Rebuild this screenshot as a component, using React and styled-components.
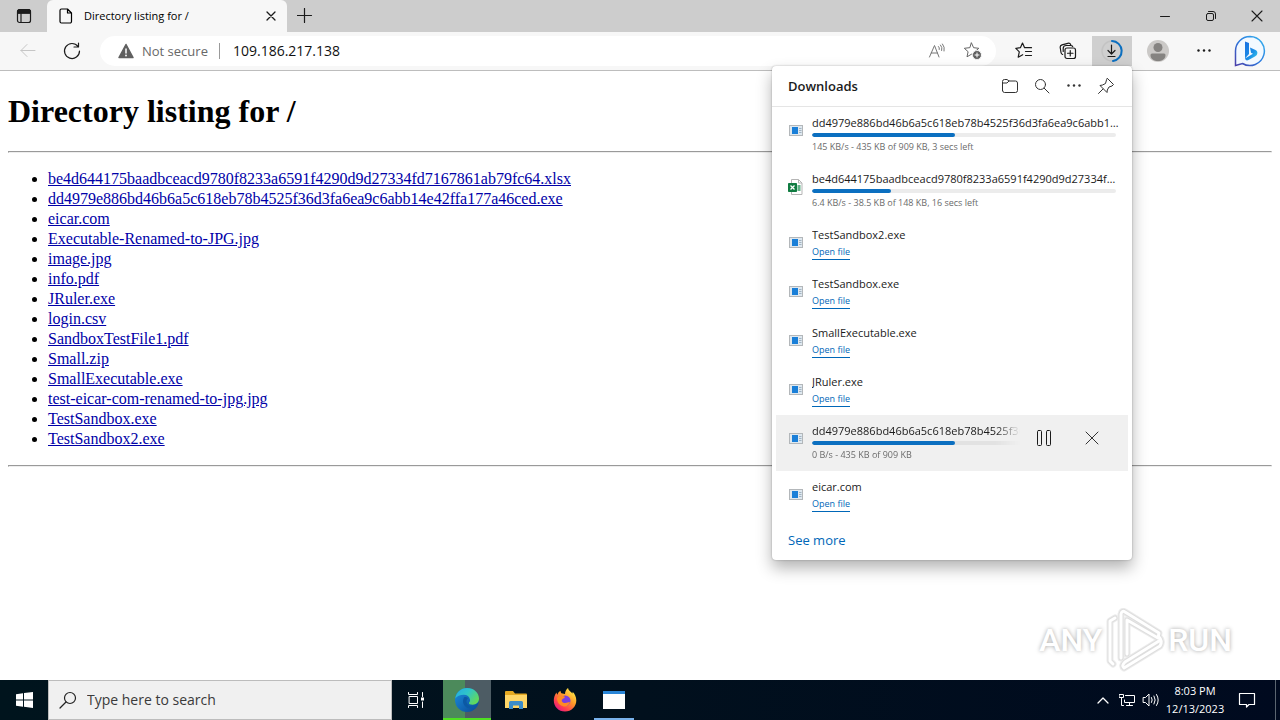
import React from "react";
import styled, { createGlobalStyle } from "styled-components";

const GlobalStyle = createGlobalStyle`
  *, *::before, *::after { box-sizing: border-box; }
  html, body { margin: 0; padding: 0; background: #fff; }
  button, input { font-family: inherit; }
  svg { display: block; flex: none; }
`;

const ui = `"Open Sans", "Noto Sans", sans-serif`;

const Desktop = styled.div`
  min-height: 100vh;
  display: flex;
  flex-direction: column;
  font-family: ${ui};
  color: #1b1b1b;
`;

/* ---------- title bar ---------- */

const TitleBar = styled.header`
  height: 32px;
  display: flex;
  align-items: stretch;
  background: #cdcdcd;
`;

const IconButton = styled.button`
  width: ${(p) => p.$w || 40}px;
  height: ${(p) => (p.$h ? p.$h + "px" : "auto")};
  flex: none;
  display: flex;
  align-items: center;
  justify-content: center;
  border: 0;
  padding: 0;
  color: ${(p) => p.$color || "#1b1b1b"};
  background: ${(p) => p.$bg || "transparent"};
`;

const Tab = styled.div`
  width: 240px;
  display: flex;
  align-items: center;
  padding: 0 4px 0 12px;
  background: #f7f7f7;
  border-radius: 6px 6px 0 0;
  font-size: 11px;
  line-height: 16px;
  color: #000;
`;

const TabTitle = styled.span`
  flex: 1;
  padding-left: 11px;
  white-space: nowrap;
`;

const Spacer = styled.div`
  flex: 1;
`;

/* ---------- toolbar ---------- */

const ToolbarWrap = styled.div`
  position: relative;
  z-index: 2;
`;

const Toolbar = styled.div`
  height: 39px;
  display: flex;
  align-items: center;
  gap: 4px;
  padding: 0 10px 0 8px;
  background: #f7f7f7;
  border-bottom: 1px solid #bdbdbd;
`;

const AddressBar = styled.form`
  flex: 1;
  height: 30px;
  margin: 0 4px;
  display: flex;
  align-items: center;
  padding: 0 5px 0 18px;
  border-radius: 15px;
  background: #fff;
  font-size: 13px;
  line-height: 20px;
`;

const SecurityLabel = styled.span`
  padding: 0 11px 0 8px;
  color: #686868;
  white-space: nowrap;
`;

const AddressInput = styled.input`
  flex: 1;
  min-width: 0;
  height: 16px;
  border: 0;
  border-left: 1px solid #9a9a9a;
  outline: 0;
  padding: 0 0 0 13px;
  background: transparent;
  font-size: 14px;
  line-height: 16px;
  color: #111;
`;

const ToolGroup = styled.div`
  display: flex;
  align-items: center;
  gap: 6px;
  padding-left: 2px;
`;

/* ---------- downloads popup ---------- */

const Popup = styled.section`
  position: absolute;
  top: 34px;
  right: 148px;
  width: 360px;
  background: #fff;
  border-radius: 4px;
  box-shadow: 0 0 2px rgba(0, 0, 0, 0.3), 0 8px 16px rgba(0, 0, 0, 0.3);
`;

const PopupHeader = styled.div`
  height: 41px;
  display: flex;
  align-items: center;
  padding: 0 10px 0 16px;
  border-bottom: 1px solid #e5e5e5;
`;

const PopupTitle = styled.h2`
  flex: 1;
  margin: 0;
  font-size: 13px;
  line-height: 20px;
  font-weight: 600;
`;

const DownloadList = styled.ul`
  list-style: none;
  margin: 0;
  padding: 0 4px;
`;

const DownloadRow = styled.li`
  display: flex;
  align-items: flex-start;
  gap: 8px;
  padding: 8px 12px;
  background: ${(p) => (p.$hovered ? "#f0f0f0" : "transparent")};
`;

const FileIcon = styled.span`
  flex: none;
  width: 16px;
  height: 32px;
  display: flex;
  align-items: center;
  justify-content: center;
`;

const DownloadBody = styled.div`
  flex: 1;
  min-width: 0;
  ${(p) =>
    p.$faded &&
    "overflow: hidden; margin-right: -8px; mask-image: linear-gradient(to right, #000 calc(100% - 24px), transparent);"}
`;

const FileName = styled.div`
  margin-right: -4px;
  font-size: 11px;
  line-height: 16px;
  white-space: nowrap;
  overflow: hidden;
  text-overflow: ${(p) => (p.$clip ? "clip" : "ellipsis")};
`;

const Track = styled.div`
  width: ${(p) => (p.$extended ? "calc(100% + 96px)" : "100%")};
  height: 4px;
  margin: 2px 0;
  border-radius: 2px;
  background: ${(p) => (p.$extended ? "#e2e2e2" : "#ececec")};
  overflow: hidden;
`;

const Fill = styled.div`
  height: 4px;
  border-radius: 2px;
  background: #0b6fc0;
`;

const Status = styled.div`
  font-size: 9px;
  line-height: 16px;
  color: #6b6b6b;
  white-space: nowrap;
`;

const OpenLink = styled.a`
  display: block;
  width: max-content;
  margin-top: 1px;
  border-bottom: 1px solid #0067b8;
  font-size: 9px;
  line-height: 15px;
  color: #0067b8;
  text-decoration: none;
`;

const RowActions = styled.div`
  display: flex;
  height: 30px;
`;

const PopupFooter = styled.div`
  height: 40px;
  display: flex;
  align-items: center;
  padding: 0 16px;
`;

const SeeMore = styled.a`
  font-size: 13px;
  line-height: 20px;
  color: #0067b8;
  text-decoration: none;
`;

/* ---------- page ---------- */

const Page = styled.main`
  flex: 1;
  padding: 0 8px;
  display: flow-root;
  position: relative;
  background: #fff;
  color: #000;
  font-family: "Liberation Serif", "Times New Roman", serif;
  font-size: 16px;
`;

const Heading = styled.h1`
  margin: 21px 0;
  font-size: 32px;
  line-height: 38px;
`;

const Rule = styled.hr`
  margin: 0;
  border: 1px solid #9a9a9a;
  border-bottom-color: #eee;
  border-right-color: #eee;
`;

const Listing = styled.ul`
  margin: 16px 0;
  padding-left: 40px;
  line-height: 20px;
`;

const FileLink = styled.a`
  color: #0000a8;
`;

const Watermark = styled.div`
  position: absolute;
  right: 48px;
  bottom: 8px;
  display: flex;
  align-items: center;
  gap: 3px;
  font-family: Roboto, "Liberation Sans", sans-serif;
  font-size: 32px;
  font-weight: 500;
  line-height: 64px;
  color: #fff;
  text-shadow: 0 0 4px rgba(0, 0, 0, 0.35);
`;

/* ---------- taskbar ---------- */

const Taskbar = styled.footer`
  height: 40px;
  display: flex;
  background: linear-gradient(to right, #00141d, #01101d 50%, #000a1f);
  color: #fff;
`;

const SearchBox = styled.label`
  width: 344px;
  display: flex;
  align-items: center;
  gap: 10px;
  padding: 0 10px;
  background: #f0f0f0;
  border: 1px solid #bcbcbc;
  color: #222;
`;

const SearchInput = styled.input`
  flex: 1;
  min-width: 0;
  border: 0;
  padding: 0;
  outline: 0;
  background: transparent;
  font-size: 14px;
  line-height: 20px;
  &::placeholder { color: #3a3a3a; opacity: 1; }
`;

const Apps = styled.nav`
  display: flex;
  gap: 1px;
  padding-left: 3px;
`;

const AppButton = styled.button`
  width: 48px;
  display: flex;
  align-items: center;
  justify-content: center;
  border: 0;
  padding: 0;
  color: #fff;
  background: ${(p) =>
    p.$active
      ? "linear-gradient(to right, #4c8a5b 45%, #4d5c64 45%)"
      : "transparent"};
  box-shadow: ${(p) => (p.$active ? "inset 0 -2px #4fe022" : "none")};
  position: relative;
  &::after {
    content: "";
    display: ${(p) => (p.$running ? "block" : "none")};
    position: absolute;
    left: 4px;
    right: 4px;
    bottom: 0;
    height: 2px;
    background: #79b2ec;
  }
`;

const Clock = styled.div`
  width: 64px;
  display: flex;
  flex-direction: column;
  justify-content: center;
  text-align: center;
  font-size: 11px;
  line-height: 18px;
  white-space: nowrap;
`;

const ShowDesktop = styled.button`
  width: 5px;
  margin-left: 8px;
  border: 0;
  border-left: 1px solid #5b6570;
  padding: 0;
  background: transparent;
`;

/* ---------- icons ---------- */

const Svg = ({ w = 16, h = w, sw = 1, children }) => (
  <svg
    width={w}
    height={h}
    viewBox={`0 0 ${w} ${h}`}
    fill="none"
    stroke="currentColor"
    strokeWidth={sw}
    strokeLinecap="round"
    strokeLinejoin="round"
    aria-hidden="true"
  >
    {children}
  </svg>
);

const TabActionsIcon = () => (
  <Svg>
    <rect x="1.5" y="1.5" width="13" height="13" rx="2" strokeWidth="1.2" />
    <path d="M1.5 5V3.5a2 2 0 0 1 2-2h9a2 2 0 0 1 2 2V5z" fill="currentColor" />
    <path d="M5 5v9.500" strokeWidth="1.2" />
  </Svg>
);
const PageIcon = () => (
  <Svg w={14} h={16} sw={1.2}>
    <path d="M2.500 1h6l4 4v8.500a1.500 1.500 0 0 1-1.500 1.500H2.500A1.500 1.500 0 0 1 1 13.500v-11A1.500 1.500 0 0 1 2.500 1zM8.500 1v4h4" />
  </Svg>
);
const CrossIcon = ({ s = 8, w = 12, sw = 1.1 }) => {
  const a = (w - s) / 2;
  const b = a + s;
  return (
    <Svg w={w} sw={sw}>
      <path d={`M${a} ${a}L${b} ${b}M${b} ${a}L${a} ${b}`} />
    </Svg>
  );
};
const PlusIcon = () => (
  <Svg sw={1.2}>
    <path d="M7.500 .5v14M.5 7.500h14" />
  </Svg>
);
const MinimizeIcon = () => (
  <Svg w={12}>
    <path d="M1.500 6.500h9" />
  </Svg>
);
const RestoreIcon = () => (
  <Svg w={12}>
    <rect x="1.500" y="3.500" width="7" height="7" rx="1.500" />
    <path d="M3.500 1.500h4.500a2.500 2.500 0 0 1 2.500 2.500v4.500" />
  </Svg>
);
const BackIcon = () => (
  <Svg>
    <path d="M15 7.500H1M7 1.500l-6 6 6 6" />
  </Svg>
);
const RefreshIcon = () => (
  <Svg w={18} sw={1.2}>
    <path d="M16.500 9A7.500 7.500 0 1 1 15 4.500M11 5h4.500V1" />
  </Svg>
);
const WarningIcon = () => (
  <Svg>
    <path d="M8 1.500L15 14.500H1z" fill="#606060" stroke="#606060" strokeWidth="1.500" />
    <path d="M8 6v4" stroke="#fff" strokeWidth="1.500" />
    <circle cx="8" cy="12.500" r="0.900" fill="#fff" stroke="none" />
  </Svg>
);
const ReadAloudIcon = () => (
  <Svg w={18}>
    <path d="M1.500 15L6.500 3.500l4.500 11.500M3.200 11h6.300M10.500 4.500a3 3 0 0 1 .8 3M12.500 3a5.500 5.500 0 0 1 1.200 5.500M14.500 2a8 8 0 0 1 1.600 7" />
  </Svg>
);
const star = "M7.500 1l2.100 4.700 5.200.6-3.900 3.400 1.100 5.100-4.500-2.600L3 14.800l1.100-5.100L.3 6.300l5.200-.6z";
const AddFavoriteIcon = () => (
  <Svg w={18}>
    <path d={star} />
    <circle cx="13" cy="13" r="4.500" fill="#5e5e5e" stroke="#fff" strokeWidth="0.800" />
    <path d="M13 11v4M11 13h4" stroke="#fff" />
  </Svg>
);
const FavoritesIcon = () => (
  <Svg w={18} sw={1.2}>
    <path d="M9.600 5.700L7.500 1 5.400 5.700.8 6.300l3.500 3.500L3.200 15.200l4.500-2.500M9.600 5.700h6.900M10.500 9.500h6M10.500 13.500h6" />
  </Svg>
);
const CollectionsIcon = () => (
  <Svg w={18} sw={1.2}>
    <rect x="6" y="6" width="10.500" height="10.500" rx="2" />
    <path d="M11.250 8.500v5.500M8.500 11.250h5.500M3.600 12.500A2.500 2.500 0 0 1 2 10.500L1.200 5.500a2.500 2.500 0 0 1 1.800-2.700l5.800-1.500a2.500 2.500 0 0 1 3 1.600l.1.600M4.200 9.500V6.500a3 3 0 0 1 3-3h4.500q1.500 0 2 1" />
  </Svg>
);
const DownloadingIcon = () => (
  <Svg w={24} sw={1.2}>
    <circle cx="12" cy="12" r="10" stroke="#c3c3c3" strokeWidth="1.500" />
    <path d="M12 2a10 10 0 0 1 1 19.900" stroke="#0b6fc0" strokeWidth="2" />
    <path d="M11.500 6v9M8 11.500l3.500 3.500 3.500-3.500M8 17.500h7" />
  </Svg>
);
const ProfileIcon = () => (
  <svg width="22" height="22" viewBox="0 0 22 22" aria-hidden="true">
    <circle cx="11" cy="11" r="11" fill="#cbc9c7" />
    <circle cx="11" cy="7.500" r="4.500" fill="#858381" />
    <path d="M3.500 15q0-1.500 1.500-1.500h12q1.500 0 1.500 1.500c0 4-3.500 6-7.500 6s-7.500-2-7.500-6z" fill="#858381" />
  </svg>
);
const DotsIcon = () => (
  <Svg>
    <g fill="currentColor" stroke="none">
      <circle cx="2.500" cy="7.500" r="1.200" />
      <circle cx="8" cy="7.500" r="1.200" />
      <circle cx="13.500" cy="7.500" r="1.200" />
    </g>
  </Svg>
);
const BingIcon = () => (
  <svg width="32" height="32" viewBox="0 0 32 32" aria-hidden="true">
    <defs>
      <linearGradient id="bingRing" x1="1" y1="0" x2="0" y2="1">
        <stop offset="0" stopColor="#36b6ee" />
        <stop offset="0.500" stopColor="#2c7be0" />
        <stop offset="1" stopColor="#4a3ea8" />
      </linearGradient>
      <linearGradient id="bingMark" x1="0" y1="0" x2="1" y2="1">
        <stop offset="0" stopColor="#1a6fe0" />
        <stop offset="0.600" stopColor="#1b8fe8" />
        <stop offset="1" stopColor="#37d0e8" />
      </linearGradient>
    </defs>
    <path d="M16 1.500a14.500 14.500 0 1 1-7.500 27L1.500 30.500V16A14.500 14.500 0 0 1 16 1.500z" fill="#f3f9ff" stroke="url(#bingRing)" strokeWidth="1.500" />
    <path d="M11 6.500l4 1.500v11l-4 4.500zM16 12.500l5.500 2.500a3.500 3.500 0 0 1 1.500 4.500c-.5 1-1.500 1.700-2.500 2.300L14.500 25a2.500 2.500 0 0 1-3.500-1.500l8-4.700-2-1z" fill="url(#bingMark)" />
  </svg>
);
const FolderOutline = () => (
  <Svg w={18}>
    <path d="M1.500 13.500v-9a2 2 0 0 1 2-2h2.500l2 1.500h6.500a2 2 0 0 1 2 2v7.500a2 2 0 0 1-2 2h-11a2 2 0 0 1-2-2zM1.500 6h4.500l2-2" />
  </Svg>
);
const SearchIcon = () => (
  <Svg>
    <circle cx="6.500" cy="6.500" r="5" />
    <path d="M10.200 10.200L15 15" />
  </Svg>
);
const PinIcon = () => (
  <Svg w={18}>
    <path d="M10.500 1.500l6 6-1.500 1.500-3 1-1.700 3-.3 2.500L3 8.500l2.500-.5 3-1.500 1-3.500zM6 12l-4.500 4.500" />
  </Svg>
);
const PauseIcon = () => (
  <Svg w={16} h={18}>
    <rect x="1.500" y="1.500" width="4" height="15" rx="1" />
    <rect x="10.500" y="1.500" width="4" height="15" rx="1" />
  </Svg>
);
const ExeIcon = () => (
  <svg width="14" height="12" viewBox="0 0 14 12" aria-hidden="true">
    <rect x="0.500" y="0.500" width="13" height="10" fill="#dfe8ef" stroke="#b3b7ba" />
    <rect x="3" y="2" width="6" height="7" fill="#1a7fd8" />
    <path d="M10 3.500h2.500M10 5.500h2.500M10 7.500h2.500" stroke="#a3b4c2" />
  </svg>
);
const ExcelIcon = () => (
  <svg width="16" height="16" viewBox="0 0 16 16" aria-hidden="true">
    <path d="M3.500.5h7l3.500 3.500v11.500H3.500z" fill="#fff" stroke="#b5b5b5" />
    <path d="M10.500.5V4H14" fill="none" stroke="#b5b5b5" />
    <path d="M9.500 7h3M9.500 9h3M9.500 11h3" stroke="#2f9a62" strokeWidth="1.400" />
    <rect x="0" y="4" width="9" height="9" rx="0.800" fill="#107c41" />
    <path d="M2.500 6.500l4 4M6.500 6.500l-4 4" stroke="#fff" strokeWidth="1.300" />
  </svg>
);
const WindowsIcon = () => (
  <svg width="17" height="16" viewBox="0 0 17 16" fill="#fff" aria-hidden="true">
    <path d="M0 2.200L7 1.200v6.300H0zM8 1l9-1v7.500H8zM0 8.500h7v6.300l-7-1zM8 8.500h9V16l-9-1.200z" />
  </svg>
);
const TaskSearchIcon = () => (
  <Svg w={18} sw={1.2}>
    <circle cx="11" cy="7" r="5.500" />
    <path d="M7 11l-6 6" />
  </Svg>
);
const TaskViewIcon = () => (
  <Svg w={18}>
    <path d="M1.500 1.500v2h9v-2M1.500 16.500v-2h9v2M15.500 1.500v4M15.500 11v5.500" />
    <rect x="2.500" y="5.500" width="8" height="7" />
    <rect x="14" y="6.500" width="3" height="3" fill="currentColor" stroke="none" />
  </Svg>
);
const EdgeIcon = () => (
  <svg width="24" height="24" viewBox="0 0 24 24" aria-hidden="true">
    <defs>
      <linearGradient id="edgeTop" x1="0" y1="0" x2="1" y2="0.600">
        <stop offset="0" stopColor="#25a9e6" />
        <stop offset="0.500" stopColor="#2fc5c9" />
        <stop offset="1" stopColor="#62d95b" />
      </linearGradient>
      <linearGradient id="edgeLow" x1="0" y1="0" x2="1" y2="1">
        <stop offset="0" stopColor="#1b8fdc" />
        <stop offset="1" stopColor="#0b4796" />
      </linearGradient>
    </defs>
    <circle cx="12" cy="12" r="12" fill="url(#edgeLow)" />
    <path d="M.3 10.500C1.200 4.500 6 0 12 0c7 0 12 5 12 10.500 0 4-3 6.200-6.200 6.200-2.800 0-4.300-1-3.800-2 .8-1 1.200-1.800 1-3C14.500 8.500 12 6.800 8.800 6.800 5 6.800 1.800 8.500.3 10.500z" fill="url(#edgeTop)" />
    <path d="M9 9.500c-2.500 4.500 0 10 5.500 11 3 .4 6-.6 8-2.500-3 1.300-8 1.200-10-1.800-1.600-2.300-1.200-4.700.5-6C11.800 9 10 8.700 9 9.500z" fill="#0c59a4" />
  </svg>
);
const ExplorerIcon = () => (
  <svg width="22" height="20" viewBox="0 0 22 20" aria-hidden="true">
    <path d="M0 2q0-1 1-1h7l2 2.500h11q1 0 1 1V18H0z" fill="#e5a922" />
    <path d="M0 5h22v13H0z" fill="#ffd667" />
    <path d="M4 19v-6.500q0-1.500 1.500-1.500h11q1.500 0 1.500 1.500V19h-4v-3.500H8V19z" fill="#3b8cc9" />
  </svg>
);
const FirefoxIcon = () => (
  <svg width="24" height="24" viewBox="0 0 24 24" aria-hidden="true">
    <defs>
      <linearGradient id="foxBody" x1="0.900" y1="0.100" x2="0.200" y2="1">
        <stop offset="0" stopColor="#fff04a" />
        <stop offset="0.400" stopColor="#ff9a28" />
        <stop offset="0.750" stopColor="#ff3f4e" />
        <stop offset="1" stopColor="#e0158a" />
      </linearGradient>
    </defs>
    <path d="M12 23.500C5.500 23.500.8 18.700.8 12.500c0-3 1-6 2.700-8 .2 1 .4 1.600.9 2.200C5 5 6 3.600 7.500 2.800c0 1 .2 1.800.9 2.500L12 6c0-2.500 1-4.500 3-6 .3 2.500 3 3.500 4.500 5.500.2-.6.2-1.100.1-1.700 2.300 2.200 3.700 5.300 3.700 8.700 0 6.200-5 11-11.300 11z" fill="url(#foxBody)" />
    <circle cx="12.200" cy="12.800" r="5.300" fill="#7a3fe0" />
    <path d="M4 10c2-2.500 4.500-2.700 7.500-1.500 1.200 1.400-1.500 1.800-2.500 3.200-.8 1.300.5 3.300 3 3.300 2 0 3-1 5-1-1 3.500-4 5-7 4.200C6 17.300 4 14 4 10z" fill="#ff8a24" />
  </svg>
);
const WindowIcon = () => (
  <svg width="22" height="18" viewBox="0 0 22 18" aria-hidden="true">
    <rect width="22" height="18" fill="#fff" />
    <rect width="22" height="3" fill="#2a86d8" />
  </svg>
);
const ChevronIcon = () => (
  <Svg w={12} sw={1.3}>
    <path d="M1 9l5-5 5 5" />
  </Svg>
);
const NetworkIcon = () => (
  <Svg>
    <path d="M6.500 3.500h9v7H5.500V8M10.500 10.500v3M7.500 13.500h6M.5 2.500h4v3h-4zM2.500 5.500v8h2" />
  </Svg>
);
const SpeakerIcon = () => (
  <Svg w={18}>
    <path d="M1.500 6.500h2L7 3v12l-3.500-3.500h-2zM9.500 6.500q1.500 2.500 0 5M12 5q2.500 4 0 8M14.500 3.500q3.500 5.500 0 11" />
  </Svg>
);
const NotificationIcon = () => (
  <Svg w={18} sw={1.2}>
    <path d="M1.500 2.500h15v11H11L8.500 16v-2.500h-7z" />
  </Svg>
);

const markPath =
  "M10 10l-5 3v40l3 3M16 50V6q1-4 4-2l34 21-1 5-31-18v34M54 33L20 54q-4 4-1 6l36-22q3-5-1-9";
const PlayMark = () => (
  <svg width="60" height="64" viewBox="0 0 60 64" fill="none" aria-hidden="true">
    <g strokeLinejoin="round" strokeLinecap="round">
      <path d={markPath} stroke="#ececec" strokeWidth="7" />
      <path d={markPath} stroke="#dedede" strokeWidth="5" />
      <path d={markPath} stroke="#fff" strokeWidth="3" />
    </g>
  </svg>
);

/* ---------- data ---------- */

const xlsx = "be4d644175baadbceacd9780f8233a6591f4290d9d27334fd7167861ab79fc64.xlsx";
const exe = "dd4979e886bd46b6a5c618eb78b4525f36d3fa6ea9c6abb14e42ffa177a46ced.exe";

const files = [
  xlsx,
  exe,
  "eicar.com",
  "Executable-Renamed-to-JPG.jpg",
  "image.jpg",
  "info.pdf",
  "JRuler.exe",
  "login.csv",
  "SandboxTestFile1.pdf",
  "Small.zip",
  "SmallExecutable.exe",
  "test-eicar-com-renamed-to-jpg.jpg",
  "TestSandbox.exe",
  "TestSandbox2.exe",
];

const downloads = [
  { name: exe, progress: 47, status: "145 KB/s - 435 KB of 909 KB, 3 secs left" },
  { name: xlsx, progress: 26, status: "6.4 KB/s - 38.5 KB of 148 KB, 16 secs left", icon: ExcelIcon },
  { name: "TestSandbox2.exe" },
  { name: "TestSandbox.exe" },
  { name: "SmallExecutable.exe" },
  { name: "JRuler.exe" },
  { name: exe, progress: 47, status: "0 B/s - 435 KB of 909 KB", hovered: true },
  { name: "eicar.com" },
];

const Download = ({ name, progress, status, hovered, icon: Icon = ExeIcon }) => (
  <DownloadRow $hovered={hovered}>
    <FileIcon>
      <Icon />
    </FileIcon>
    <DownloadBody $faded={hovered}>
      <FileName $clip={hovered}>{name}</FileName>
      {status ? (
        <>
          <Track
            $extended={hovered}
            role="progressbar"
            aria-label={name}
            aria-valuenow={progress}
          >
            <Fill style={{ width: `${progress}%` }} />
          </Track>
          <Status>{status}</Status>
        </>
      ) : (
        <OpenLink href="#">Open file</OpenLink>
      )}
    </DownloadBody>
    {hovered && (
      <RowActions>
        <IconButton $w={48} aria-label="Pause download"><PauseIcon /></IconButton>
        <IconButton $w={48} $color="#333" aria-label="Cancel download"><CrossIcon s={12} w={14} sw={1} /></IconButton>
      </RowActions>
    )}
  </DownloadRow>
);

export default function App() {
  return (
    <Desktop>
      <GlobalStyle />
      <TitleBar>
        <IconButton $w={47} aria-label="Tab actions menu"><TabActionsIcon /></IconButton>
        <Tab>
          <PageIcon />
          <TabTitle>Directory listing for /</TabTitle>
          <IconButton $w={24} $h={24} aria-label="Close tab"><CrossIcon sw={1.3} /></IconButton>
        </Tab>
        <IconButton $w={36} aria-label="New tab"><PlusIcon /></IconButton>
        <Spacer />
        <IconButton $w={46} aria-label="Minimize"><MinimizeIcon /></IconButton>
        <IconButton $w={46} aria-label="Restore"><RestoreIcon /></IconButton>
        <IconButton $w={46} aria-label="Close"><CrossIcon s={10} /></IconButton>
      </TitleBar>

      <ToolbarWrap>
        <Toolbar>
          <IconButton $h={30} $color="#c6c6c6" aria-label="Back"><BackIcon /></IconButton>
          <IconButton $h={30} aria-label="Refresh"><RefreshIcon /></IconButton>
          <AddressBar>
            <WarningIcon />
            <SecurityLabel>Not secure</SecurityLabel>
            <AddressInput aria-label="Address" defaultValue="109.186.217.138" />
            <IconButton type="button" $w={36} $h={28} $color="#777" aria-label="Read aloud"><ReadAloudIcon /></IconButton>
            <IconButton type="button" $w={36} $h={28} $color="#666" aria-label="Add to favorites"><AddFavoriteIcon /></IconButton>
          </AddressBar>
          <IconButton $h={30} aria-label="Favorites"><FavoritesIcon /></IconButton>
          <IconButton $h={30} aria-label="Collections"><CollectionsIcon /></IconButton>
          <IconButton $h={30} $bg="#cfcfcf" aria-label="Downloads"><DownloadingIcon /></IconButton>
          <ToolGroup>
            <IconButton $h={30} aria-label="Profile"><ProfileIcon /></IconButton>
            <IconButton $h={30} aria-label="Settings and more"><DotsIcon /></IconButton>
            <IconButton $h={32} aria-label="Bing"><BingIcon /></IconButton>
          </ToolGroup>
        </Toolbar>

        <Popup>
          <PopupHeader>
            <PopupTitle>Downloads</PopupTitle>
            <IconButton $w={32} $h={32} $color="#333" aria-label="Open downloads folder"><FolderOutline /></IconButton>
            <IconButton $w={32} $h={32} $color="#333" aria-label="Search downloads"><SearchIcon /></IconButton>
            <IconButton $w={32} $h={32} $color="#333" aria-label="More options"><DotsIcon /></IconButton>
            <IconButton $w={32} $h={32} $color="#333" aria-label="Pin downloads"><PinIcon /></IconButton>
          </PopupHeader>
          <DownloadList>
            {downloads.map((d, i) => (
              <Download key={i} {...d} />
            ))}
          </DownloadList>
          <PopupFooter>
            <SeeMore href="#">See more</SeeMore>
          </PopupFooter>
        </Popup>
      </ToolbarWrap>

      <Page>
        <Heading>Directory listing for /</Heading>
        <Rule />
        <Listing>
          {files.map((f) => (
            <li key={f}>
              <FileLink href="#">{f}</FileLink>
            </li>
          ))}
        </Listing>
        <Rule />
        <Watermark>
          <span>ANY</span>
          <PlayMark />
          <span>RUN</span>
        </Watermark>
      </Page>

      <Taskbar>
        <AppButton aria-label="Start"><WindowsIcon /></AppButton>
        <SearchBox>
          <TaskSearchIcon />
          <SearchInput aria-label="Search" placeholder="Type here to search" />
        </SearchBox>
        <AppButton aria-label="Task view"><TaskViewIcon /></AppButton>
        <Apps>
          <AppButton $active aria-label="Microsoft Edge"><EdgeIcon /></AppButton>
          <AppButton aria-label="File Explorer"><ExplorerIcon /></AppButton>
          <AppButton aria-label="Firefox"><FirefoxIcon /></AppButton>
          <AppButton $running aria-label="Application window"><WindowIcon /></AppButton>
        </Apps>
        <Spacer />
        <IconButton $w={24} $color="#fff" aria-label="Show hidden icons"><ChevronIcon /></IconButton>
        <IconButton $w={24} $color="#fff" aria-label="Network"><NetworkIcon /></IconButton>
        <IconButton $w={24} $color="#fff" aria-label="Volume"><SpeakerIcon /></IconButton>
        <Clock>
          <span>8:03 PM</span>
          <span>12/13/2023</span>
        </Clock>
        <IconButton $w={40} $color="#fff" aria-label="Notifications"><NotificationIcon /></IconButton>
        <ShowDesktop aria-label="Show desktop" />
      </Taskbar>
    </Desktop>
  );
}
